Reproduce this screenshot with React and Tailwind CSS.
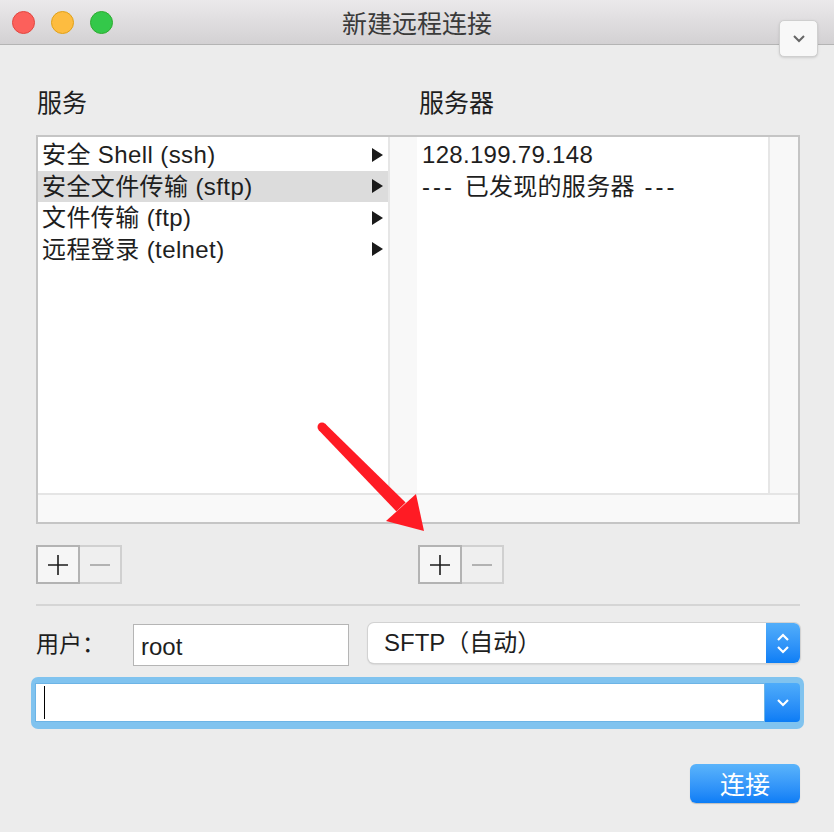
const Tri = () => (
  <svg width="11" height="14" viewBox="0 0 11 14">
    <polygon points="0,0 11,7 0,14" fill="#1a1a1a" />
  </svg>
);

const services = [
  { name: '安全 Shell (ssh)' },
  { name: '安全文件传输 (sftp)', selected: true },
  { name: '文件传输 (ftp)' },
  { name: '远程登录 (telnet)' },
];

const PlusMinus = () => (
  <div className="flex">
    <div className="flex h-[39px] w-[44px] items-center justify-center border-2 border-[#b3b3b3] bg-[#f6f6f6]">
      <svg width="22" height="22" viewBox="0 0 22 22">
        <path d="M11 1v20M1 11h20" stroke="#1c1c1c" strokeWidth="1.6" />
      </svg>
    </div>
    <div className="flex h-[39px] w-[42px] items-center justify-center border-2 border-l-0 border-[#d0d0d0] bg-[#efefef]">
      <svg width="22" height="4" viewBox="0 0 22 4">
        <path d="M1 2h20" stroke="#b2b2b2" strokeWidth="2" />
      </svg>
    </div>
  </div>
);

export default function App() {
  return (
    <div className="relative h-[832px] w-[834px] overflow-hidden bg-[#ececec] font-['Liberation_Sans','Noto_Sans_CJK_SC',sans-serif] text-[#1e1e1e]">
      {/* title bar */}
      <div className="grid h-[45px] grid-cols-[1fr_auto_1fr] items-center border-b border-[#b4b4b4] bg-gradient-to-b from-[#ebe9eb] to-[#d3d1d3]">
        <div className="flex gap-[16px] pl-[12px]">
          <span className="h-[23px] w-[23px] rounded-full border border-[#e2463f] bg-[#fc605b]" />
          <span className="h-[23px] w-[23px] rounded-full border border-[#e1a116] bg-[#fdbc40]" />
          <span className="h-[23px] w-[23px] rounded-full border border-[#2dac2f] bg-[#34c84a]" />
        </div>
        <div className="font-['Noto_Sans_CJK_SC',sans-serif] text-[25px] leading-[30px] text-[#3a3a3a]">新建远程连接</div>
        <div />
      </div>

      <div className="absolute left-[779px] top-[20px] flex h-[37px] w-[39px] items-center justify-center rounded-[5px] border border-[#cfcfcf] bg-[#f8f8f8] shadow-sm">
        <svg width="14" height="9" viewBox="0 0 14 9">
          <path d="M2 2l5 5 5-5" fill="none" stroke="#666" strokeWidth="2" />
        </svg>
      </div>

      <div className="pl-[36px] pr-[34px]">
        {/* labels */}
        <div className="mt-[43px] flex h-[30px] text-[25px] leading-[30px]">
          <div className="w-[382px] pl-[1px]">服务</div>
          <div className="pl-[1px]">服务器</div>
        </div>

        {/* list box */}
        <div className="mt-[17px] flex h-[389px] flex-col border-2 border-[#c5c5c5] bg-white">
          <div className="flex min-h-0 flex-1">
            <div className="w-[350px] pt-[2px] text-[24px] tracking-[0.4px]">
              {services.map((s) => (
                <div
                  key={s.name}
                  className={`flex h-[31.5px] items-center justify-between pl-[4px] pr-[5px] leading-[31px] ${s.selected ? 'bg-[#dcdcdc]' : ''}`}
                >
                  <span>{s.name}</span>
                  <Tri />
                </div>
              ))}
            </div>
            <div className="w-[29px] border-l-2 border-[#e6e6e6] bg-[#f8f8f8]" />
            <div className="w-[351px] pl-[5px] pt-[2px] text-[24px] tracking-[0.3px]">
              <div className="h-[31.5px] leading-[31px]">128.199.79.148</div>
              <div className="h-[31.5px] leading-[31px]">
                <span className="tracking-[3px]">--- </span>已发现的服务器<span className="tracking-[3px]"> ---</span>
              </div>
            </div>
            <div className="w-[30px] border-l-2 border-[#e6e6e6] bg-[#f8f8f8]" />
          </div>
          <div className="h-[29px] border-t-2 border-[#e5e5e5] bg-[#f9f9f9]" />
        </div>

        {/* add / remove buttons */}
        <div className="mt-[21px] flex">
          <div className="w-[382px]">
            <PlusMinus />
          </div>
          <PlusMinus />
        </div>

        <div className="mt-[20px] h-[2px] bg-[#d5d5d5]" />

        {/* user row */}
        <div className="mt-[17px] flex items-start">
          <div className="w-[97px] font-['Noto_Sans_CJK_SC',sans-serif] text-[23px] leading-[38px]">用户：</div>
          <div className="mt-[1px] h-[42px] w-[216px] border border-[#b5b5b5] bg-white pl-[7px] pt-[4px] text-[24px] leading-[36px]">root</div>
          <div className="ml-[19px] flex h-[40px] w-[432px] rounded-[6px] bg-white shadow-[0_0_0_1px_#d2d2d2,0_1px_2px_rgba(0,0,0,0.25)]">
            <div className="flex-1 pl-[16px] text-[24px] leading-[40px]">SFTP（自动）</div>
            <div className="flex w-[34px] flex-col items-center justify-center gap-[5px] rounded-r-[6px] bg-gradient-to-b from-[#52aefa] to-[#0a7ef6]">
              <svg width="14" height="8" viewBox="0 0 14 8">
                <path d="M2 7l5-5 5 5" fill="none" stroke="#fff" strokeWidth="2.2" />
              </svg>
              <svg width="14" height="8" viewBox="0 0 14 8">
                <path d="M2 1l5 5 5-5" fill="none" stroke="#fff" strokeWidth="2.2" />
              </svg>
            </div>
          </div>
        </div>

        {/* host combo with focus ring */}
        <div className="ml-[-5px] mr-[-4px] mt-[11px] h-[52px] rounded-[7px] bg-[#80c3ef] px-[4px] pb-[7px] pt-[6px]">
          <div className="flex h-full">
            <div className="flex flex-1 items-center border border-[#6cb4e6] bg-white pl-[8px]">
              <span className="h-[33px] w-[1px] bg-black" />
            </div>
            <div className="flex w-[35px] items-center justify-center rounded-r-[4px] bg-gradient-to-b from-[#4eacfa] to-[#0a7cf5]">
              <svg width="14" height="9" viewBox="0 0 14 9">
                <path d="M2 2l5 5 5-5" fill="none" stroke="#fff" strokeWidth="2.2" />
              </svg>
            </div>
          </div>
        </div>

        {/* connect */}
        <div className="mt-[35px] flex justify-end">
          <button className="h-[39px] w-[110px] rounded-[6px] bg-gradient-to-b from-[#5ab4fb] to-[#0a7df6] font-['Noto_Sans_CJK_SC',sans-serif] text-[25px] leading-[39px] text-white shadow-[0_1px_1px_rgba(0,0,0,0.2)]">
            连接
          </button>
        </div>
      </div>

      {/* red annotation arrow */}
      <svg className="pointer-events-none absolute left-0 top-0" width="834" height="832">
        <circle cx="322" cy="427" r="4.5" fill="#ff1b24" />
        <polygon points="318.8,430.2 325.2,423.8 405.6,502.6 396.4,511.4" fill="#ff1b24" />
        <polygon points="386,521 416,494 424,531" fill="#ff1b24" />
      </svg>
    </div>
  );
}
